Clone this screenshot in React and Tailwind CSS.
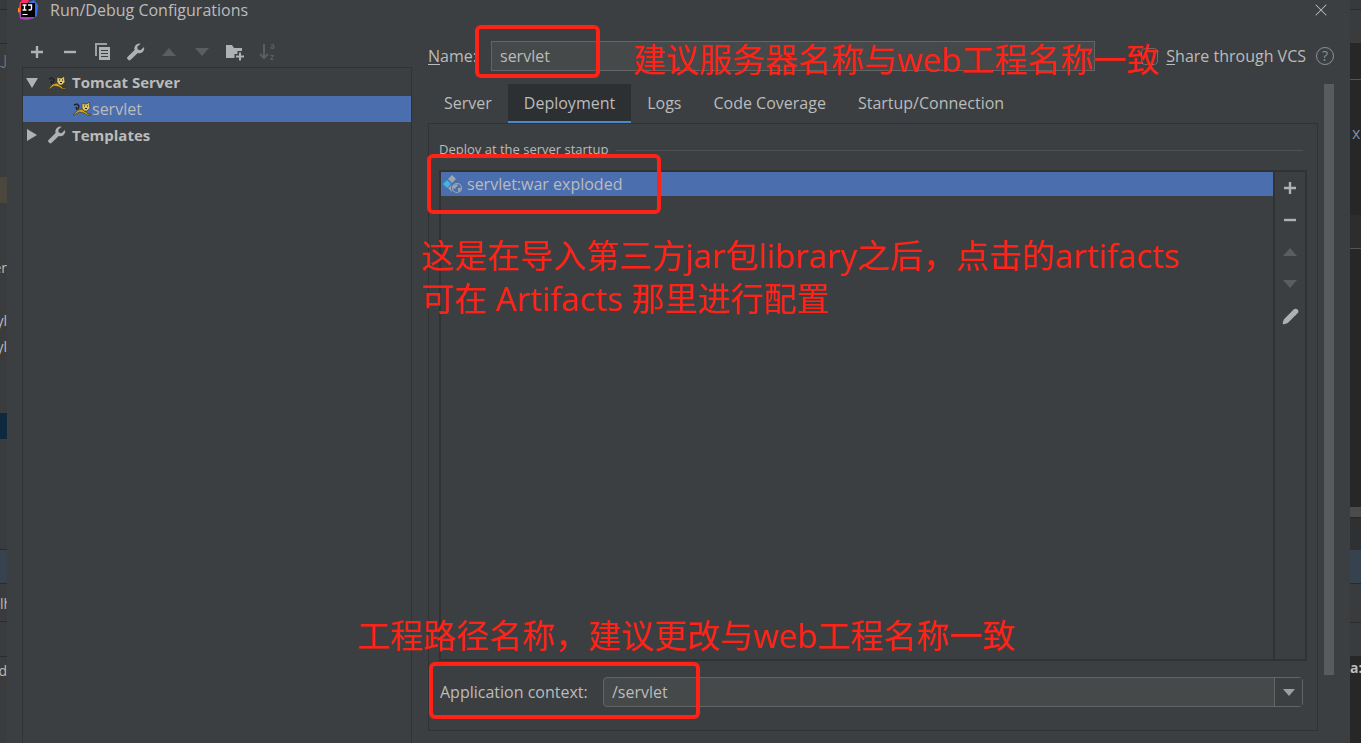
import { Pencil, X } from "lucide-react";

const LEFT_STRIP = [
    { height: "h-[9px]", tone: "bg-[#37393b]" },
    { height: "h-[34px]", tone: "border-t border-[#2b2b2b]" },
    { height: "h-[134px]", tone: "border-t border-[#2b2b2b] text-[#6b7680]", text: "_J", place: "pt-1" },
    { height: "h-[26px]", tone: "bg-[#4b473c]" },
    { height: "h-[53px]" },
    { height: "h-[26px]", text: "er" },
    { height: "h-[27px]" },
    { height: "h-[26px]", text: "yl" },
    { height: "h-[26px]", text: "yl" },
    { height: "h-[52px]" },
    { height: "h-[26px]", tone: "bg-[#0d293e]" },
    { height: "h-[110px]" },
    { height: "h-[34px]", tone: "bg-[#36434f] border-t border-[#2b2b2b]" },
    { height: "h-[39px]", tone: "border-y border-[#2b2b2b]", text: "lh", place: "pt-2 justify-start!" },
    { height: "h-[34px]" },
    { height: "h-[87px]", tone: "border-t border-[#2b2b2b]", text: "d", place: "pt-[2px]" },
];

const RIGHT_STRIP = [
    { height: "h-[9px]", tone: "bg-[#37393b]" },
    { height: "h-[34px]", tone: "bg-[#3a3b3d] border-t border-[#2b2b2b]" },
    { height: "h-[37px]", tone: "bg-[#272727] border-b border-[#555555]" },
    { height: "h-[41px]", tone: "bg-[#272727]" },
    { height: "h-[94px]", tone: "bg-[#272727] text-base text-[#7d8da5]", text: "x", place: "pl-[2px]" },
    { height: "h-[34px]", tone: "bg-[#2d2d2d] border-b border-[#555555]" },
    { height: "h-[258px]", tone: "bg-[#272727]" },
    { height: "h-[10px]", tone: "bg-[#4b4b4b]" },
    { height: "h-[33px]", tone: "bg-[#2f3031] border-t border-[#272727]" },
    { height: "h-[34px]", tone: "bg-[#36434f] border-b border-[#2b2b2b]" },
    { height: "h-[39px]", tone: "border-b border-[#2b2b2b]" },
    { height: "h-[33px]" },
    { height: "h-[87px]", tone: "bg-[#272727] font-bold", text: "a:" },
];

const TABS = ["Server", "Deployment", "Logs", "Code Coverage", "Startup/Connection"];

const EditorStrip = ({ rows, align }) => (
    <div className={`flex shrink-0 flex-col overflow-hidden bg-[#393b3d] text-sm leading-6 ${align}`} aria-hidden="true">
        {rows.map((row, i) => (
            <div key={i} className={`flex shrink-0 overflow-hidden ${row.height} ${row.tone || ""} ${row.place || ""} ${align}`}>
                {row.text}
            </div>
        ))}
    </div>
);

const IdeaLogo = () => (
    <svg width="20" height="20" viewBox="0 0 20 20">
        <path d="M0 8L4 7L4 15L0 12Z" fill="#fc8a2a" />
        <path d="M2 2L9 0L12 10L3 14L1 8Z" fill="#f9453a" />
        <path d="M4 0L11 0L8 8L2 5Z" fill="#fe2d6c" />
        <path d="M11 2L16 0L20 5L19 16L14 19L9 16Z" fill="#3b6cf0" />
        <path d="M1 12L8 10L16 18L9 20L2 19Z" fill="#a940b8" />
        <rect x="3" y="3" width="14" height="14" fill="#000" />
        <path d="M4.500 5h4M6.500 5v5M4.500 10h4M10 5h3.500v3.500q0 1.500-1.500 1.500h-1.500" stroke="#fff" strokeWidth="1.400" fill="none" />
        <path d="M4.500 14.500h5" stroke="#fff" strokeWidth="1" />
    </svg>
);

const PlusIcon = () => (
    <svg width="14" height="14" viewBox="0 0 14 14">
        <path d="M7 1v12M1 7h12" stroke="#afb1b3" strokeWidth="2.400" />
    </svg>
);

const MinusIcon = () => (
    <svg width="14" height="14" viewBox="0 0 14 14">
        <path d="M1 7h12" stroke="#afb1b3" strokeWidth="2.400" />
    </svg>
);

const CopyIcon = () => (
    <svg width="18" height="18" viewBox="0 0 18 18">
        <path d="M1 0h12v2H3v11H1z" fill="#9da0a2" />
        <path d="M5 4h11v13H5z" fill="#afb1b3" />
        <path d="M7 7.500h7M7 10.500h7M7 13.500h7" stroke="#3c3f41" strokeWidth="1.200" />
    </svg>
);

const WrenchIcon = () => (
    <svg width="18" height="18" viewBox="0 0 18 18">
        <path
            d="M12.500 0.500A5 5 0 0 0 7.600 7L1 13.500A1.900 1.900 0 0 0 1 16.500A2 2 0 0 0 4 16.600L10.700 10.100A5 5 0 0 0 17 4L13.500 7.200L10.700 6.600L10.300 3.800L13.600 0.700Z"
            fill="#afb1b3"
        />
    </svg>
);

const Triangle = ({ points, color }) => (
    <svg width="16" height="16" viewBox="0 0 16 16">
        <polygon points={points} fill={color} />
    </svg>
);

const UpIcon = () => <Triangle points="1,12 15,12 8,4" color="#5b5d5f" />;
const DownIcon = () => <Triangle points="1,4 15,4 8,12" color="#5b5d5f" />;

const FolderPlusIcon = () => (
    <svg width="20" height="18" viewBox="0 0 20 18">
        <path d="M1 2h6l2 3h8v10H1z" fill="#afb1b3" />
        <path d="M15 8v10M9.500 13.500h10.500" stroke="#3c3f41" strokeWidth="5" />
        <path d="M15 9.500v8M11 13.500h8" stroke="#afb1b3" strokeWidth="2" />
    </svg>
);

const SortIcon = () => (
    <svg width="18" height="18" viewBox="0 0 18 18" className="overflow-visible">
        <path d="M5 1v14M1 11l4 4 4-4" stroke="#5b5d5f" strokeWidth="2" fill="none" />
        <text x="11" y="6" fontSize="8" fontWeight="700" fill="#5b5d5f">a</text>
        <text x="11" y="17" fontSize="8" fontWeight="700" fill="#5b5d5f">z</text>
    </svg>
);

const TomcatIcon = () => (
    <svg width="18" height="14" viewBox="0 0 18 14">
        <path d="M0 13l3-3 2-2 4-1 4 3 2 2h3v1h-4l-3-2-5-1-3 2-2 1z" fill="#d3a11e" stroke="#33301f" strokeWidth="0.600" />
        <path d="M1 3l3-1 2 2-1 3M3 5l1 3" stroke="#1f2224" strokeWidth="1.400" fill="none" />
        <path d="M9 1l2 1h3l2-2 1 6-3 3h-3L9 6z" fill="#e3c565" stroke="#33301f" strokeWidth="0.600" />
        <path d="M11 4h1M14 4h1M12 6.500h2" stroke="#1d1d1d" strokeWidth="1" />
    </svg>
);

const ArtifactIcon = () => (
    <svg width="20" height="20" viewBox="0 0 20 20">
        <path d="M9 1l4 4-4 4-4-4z" fill="#9aa7b0" />
        <path d="M4 6l4 4-4 4-4-4z" fill="#40b6e0" />
        <path d="M9 11l3 3-3 4-4-4z" fill="#9aa7b0" />
        <circle cx="14" cy="14" r="6" fill="#4b6eaf" />
        <circle cx="14" cy="14" r="4.500" fill="none" stroke="#9aa7b0" strokeWidth="1.200" />
        <path d="M10 11.500l4-1.500 1 2-2 1-1 2-2-1zM15 14l3 0-1 3-2 1z" fill="#9aa7b0" />
    </svg>
);

const IconButton = ({ label, children }) => (
    <button type="button" aria-label={label} className="flex h-8 w-[33px] shrink-0 items-center justify-center">
        {children}
    </button>
);

const Note = ({ className, children }) => (
    <p className={`pointer-events-none absolute z-10 text-[33px] leading-[43px] whitespace-nowrap text-[#ff2216] ${className}`}>
        {children}
    </p>
);

const Highlight = ({ className }) => (
    <div className={`pointer-events-none absolute z-10 rounded-md border-4 border-[#ff2216] ${className}`} />
);

const ConfigTree = () => (
    <div className="flex w-[390px] shrink-0 flex-col">
        <div className="mt-4 -ml-[2px] flex h-[31px] items-center">
            <IconButton label="Add"><PlusIcon /></IconButton>
            <IconButton label="Remove"><MinusIcon /></IconButton>
            <IconButton label="Copy"><CopyIcon /></IconButton>
            <IconButton label="Edit templates"><WrenchIcon /></IconButton>
            <IconButton label="Move up"><UpIcon /></IconButton>
            <IconButton label="Move down"><DownIcon /></IconButton>
            <IconButton label="New folder"><FolderPlusIcon /></IconButton>
            <IconButton label="Sort"><SortIcon /></IconButton>
        </div>
        <ul className="flex-1 border border-b-0 border-[#323232] pt-px">
            <li className="flex h-[27px] items-center pl-px text-[15px] font-bold">
                <Triangle points="2,3 14,3 8,13" color="#afb1b3" />
                <span className="ml-2 flex w-6"><TomcatIcon /></span>
                Tomcat Server
            </li>
            <li className="flex h-[26px] items-center gap-px bg-[#4b6eaf] pl-[50px]">
                <TomcatIcon />
                servlet
            </li>
            <li className="flex h-[26px] items-center pl-px text-[15px] font-bold">
                <Triangle points="3,2 13,8 3,14" color="#afb1b3" />
                <span className="ml-2 flex w-6"><WrenchIcon /></span>
                Templates
            </li>
        </ul>
    </div>
);

const NameRow = () => (
    <div className="relative mt-5 flex h-8 items-center">
        <label htmlFor="config-name" className="w-[63px]">
            <span className="underline underline-offset-2">N</span>ame:
        </label>
        <input
            id="config-name"
            defaultValue="servlet"
            className="h-[30px] min-w-0 flex-1 border border-[#646464] bg-[#45494a] px-2 pb-px outline-none"
        />
        <label className="ml-[46px] flex items-center gap-2">
            <input type="checkbox" className="h-[17px] w-[17px] appearance-none rounded-sm border border-[#6b6b6b]" />
            <span><span className="underline underline-offset-2">S</span>hare through VCS</span>
        </label>
        <button
            type="button"
            aria-label="Help"
            className="ml-[10px] flex h-[18px] w-[18px] items-center justify-center rounded-full border border-[#8c9296] text-sm leading-4 text-[#8c9296]"
        >
            ?
        </button>
        <Highlight className="-top-[15px] left-[47px] h-[53px] w-[125px]" />
        <Note className="-top-[2px] left-[205px]">建议服务器名称与web工程名称一致</Note>
    </div>
);

const Tabs = () => (
    <div role="tablist" className="flex h-10 items-stretch">
        {TABS.map((tab) => (
            <button
                key={tab}
                type="button"
                role="tab"
                aria-selected={tab === "Deployment"}
                className={`border-b-3 px-4 ${tab === "Deployment" ? "border-[#4a88c7] bg-[#2d3033]" : "border-transparent"}`}
            >
                {tab}
            </button>
        ))}
    </div>
);

const DeploymentPanel = () => (
    <div className="-mt-px flex flex-1 flex-col border border-[#323232] px-[10px] pb-[23px]">
        <div className="mt-4 flex h-5 items-center gap-2 pr-1 text-[13px]">
            Deploy at the server startup
            <span className="h-px flex-1 bg-[#515151]" />
        </div>
        <div className="relative mt-[10px] flex flex-1 border-2 border-[#323232]">
            <ul className="min-w-0 flex-1">
                <li className="flex h-6 items-center gap-1 bg-[#4b6eaf] pl-[2px]">
                    <ArtifactIcon />
                    servlet:war exploded
                </li>
            </ul>
            <div className="flex w-8 flex-col items-center border-l-2 border-[#323232]">
                <IconButton label="Add artifact"><PlusIcon /></IconButton>
                <IconButton label="Remove artifact"><MinusIcon /></IconButton>
                <IconButton label="Move artifact up"><UpIcon /></IconButton>
                <IconButton label="Move artifact down"><DownIcon /></IconButton>
                <IconButton label="Edit artifact"><Pencil size={17} fill="#afb1b3" color="#afb1b3" /></IconButton>
            </div>
            <Highlight className="-top-[18px] -left-[14px] h-[60px] w-[234px]" />
            <Note className="top-[62px] -left-[20px]">
                这是在导入第三方jar包library之后，点击的artifacts
                <br />
                可在 Artifacts 那里进行配置
            </Note>
            <Note className="bottom-[2px] -left-[84px]">工程路径名称，建议更改与web工程名称一致</Note>
        </div>
        <div className="relative mt-4 flex h-[30px] items-center pr-1">
            <label htmlFor="app-context" className="w-[164px] pl-px">Application context:</label>
            <div className="flex h-full flex-1 rounded-sm border border-[#646464] bg-[#45494a]">
                <input id="app-context" defaultValue="/servlet" className="min-w-0 flex-1 px-2 pb-px outline-none" />
                <button
                    type="button"
                    aria-label="Show contexts"
                    className="flex w-7 items-center justify-center border-l border-[#646464] bg-[#3c3f41]"
                >
                    <Triangle points="2,5 14,5 8,12" color="#9da0a2" />
                </button>
            </div>
            <Highlight className="-top-[15px] -left-[10px] h-[57px] w-[271px]" />
        </div>
    </div>
);

export default function App() {
    return (
        <div className="flex h-screen min-h-[480px] overflow-hidden bg-[#3c3f41] font-['Open_Sans','Noto_Sans_CJK_SC',sans-serif] text-base text-[#bbbbbb]">
            <EditorStrip rows={LEFT_STRIP} align="w-[7px] justify-end" />
            <main className="flex min-w-0 flex-1 flex-col pr-4 pl-[15px]">
                <header className="flex h-5 items-center justify-between">
                    <h1 className="-ml-1 flex items-center gap-3">
                        <IdeaLogo />
                        Run/Debug Configurations
                    </h1>
                    <button type="button" aria-label="Close" className="mr-[3px]">
                        <X size={20} strokeWidth={1.25} />
                    </button>
                </header>
                <div className="flex min-h-0 flex-1">
                    <ConfigTree />
                    <section className="flex min-w-0 flex-1 flex-col pl-4">
                        <NameRow />
                        <div className="mt-3 flex flex-1 gap-[6px]">
                            <div className="flex min-w-0 flex-1 flex-col pb-3">
                                <Tabs />
                                <DeploymentPanel />
                            </div>
                            <div className="mb-[68px] w-[10px] bg-[#5a5b5d]" />
                        </div>
                    </section>
                </div>
            </main>
            <EditorStrip rows={RIGHT_STRIP} align="w-[11px]" />
        </div>
    );
}
